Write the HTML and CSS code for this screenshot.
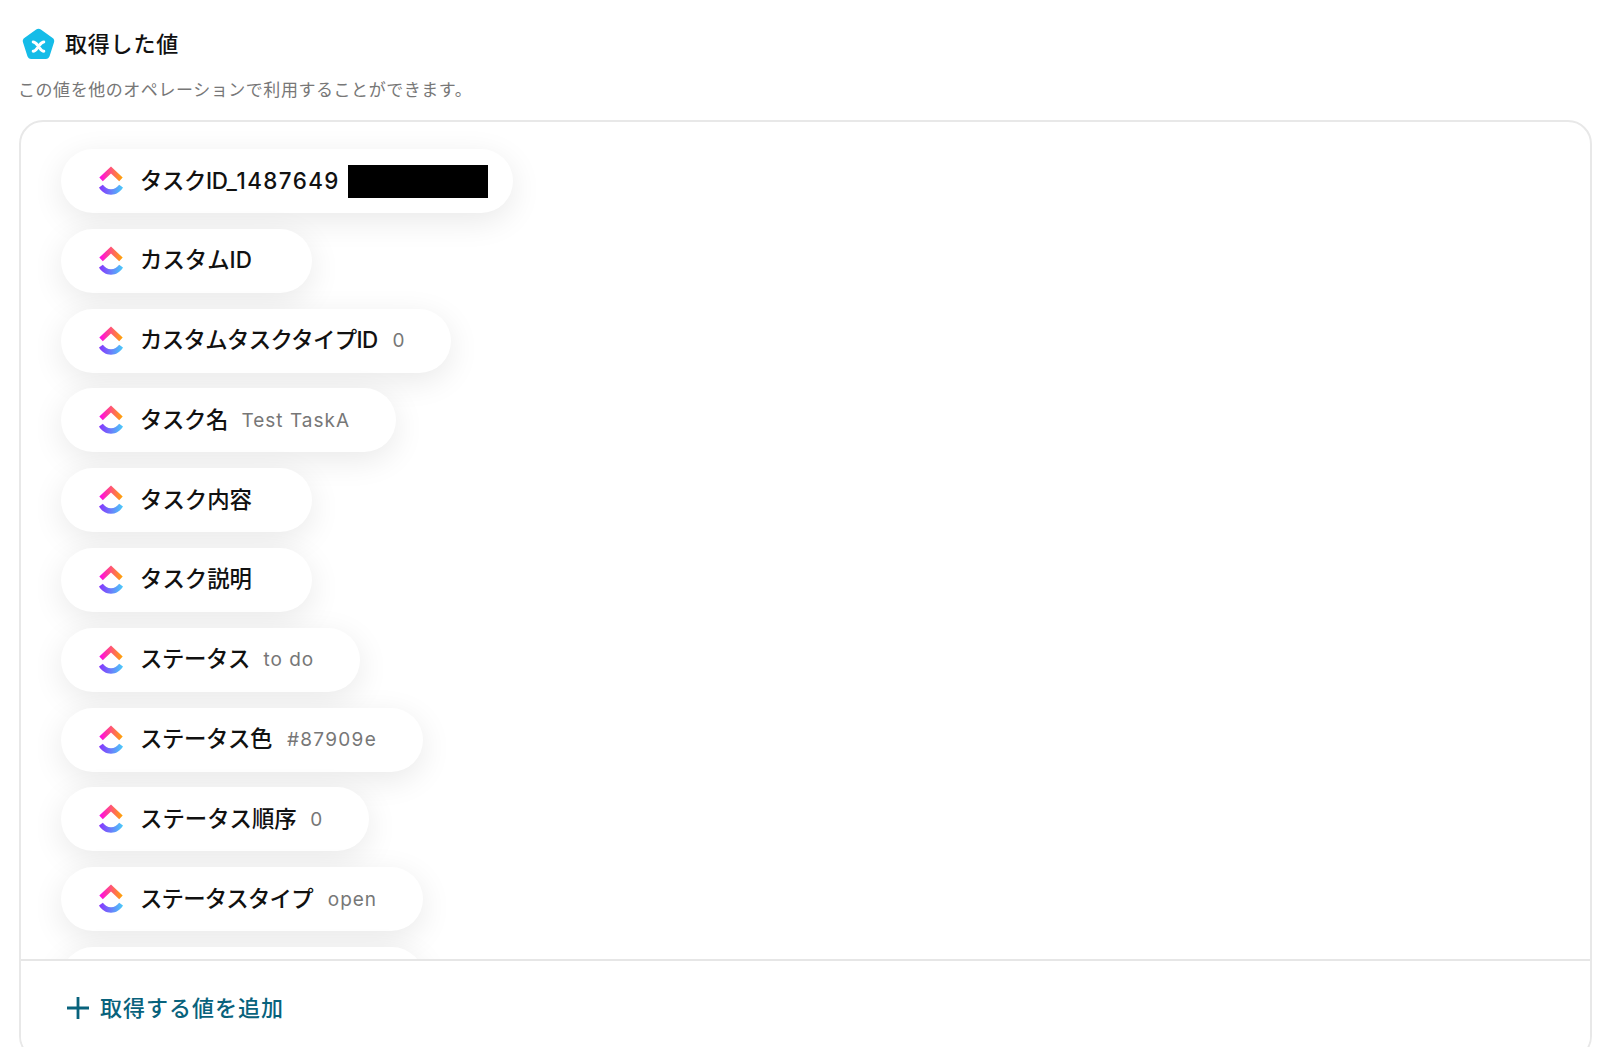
FILE: index.html
```html
<!DOCTYPE html>
<html lang="ja">
<head>
<meta charset="utf-8">
<title>取得した値</title>
<link rel="stylesheet" href="styles.css">
</head>
<body>
<svg class="defs" width="0" height="0" aria-hidden="true">
  <defs>
    <linearGradient id="cuTop" x1="0" y1="0" x2="1" y2="0">
      <stop offset="0" stop-color="#ff02f0"/><stop offset="1" stop-color="#ffa800"/>
    </linearGradient>
    <linearGradient id="cuBottom" x1="0" y1="0" x2="1" y2="0">
      <stop offset="0" stop-color="#8930fd"/><stop offset="1" stop-color="#49ccf9"/>
    </linearGradient>
    <symbol id="cu" viewBox="0 0 24 30">
      <path d="M0.300 11.600 12 0.600 23.700 11.600 20.200 15.300 12 7.600 3.800 15.300Z" fill="url(#cuTop)"/>
      <path d="M0 21.600 3.800 18.700C5.900 21.400 8.600 23.200 12 23.200 15.400 23.200 18.100 21.400 20.200 18.700L24 21.600C21.200 26.200 17 28.800 12 28.800 7 28.800 2.800 26.200 0 21.600Z" fill="url(#cuBottom)"/>
    </symbol>
  </defs>
</svg>
<main class="page">
  <header class="head">
    <svg class="yoom" viewBox="0 0 34 33" aria-hidden="true">
      <path d="M14.600 1.100C16 0 18 0 19.400 1.100L31.600 9.900C33 10.900 33.600 12.700 33 14.300L28.400 28.600C27.900 30.300 26.300 31.400 24.600 31.400H9.400C7.700 31.400 6.100 30.300 5.600 28.600L1 14.300C.4 12.700 1 10.900 2.400 9.900Z" fill="#15bce8"/>
      <path d="M11.500 14C14 14 15 16 17 18.500 19 16 20 14 22.500 14M11.500 23.500C14 23.500 15 21 17 18.500 19 21 20 23.500 22.500 23.500" fill="none" stroke="#fff" stroke-width="3" stroke-linecap="round" stroke-linejoin="round"/>
    </svg>
    <h1 class="title">取得した値</h1>
  </header>
  <p class="sub">この値を他のオペレーションで利用することができます。</p>
  <section class="card">
    <div class="list">
      <div class="pill"><svg class="cu"><use href="#cu"/></svg><span class="label kana-mid">タスクID_<span class="num">1487649</span></span><span class="redact"></span></div>
      <div class="pill"><svg class="cu"><use href="#cu"/></svg><span class="label">カスタムID</span></div>
      <div class="pill"><svg class="cu"><use href="#cu"/></svg><span class="label kana-long">カスタムタスクタイプID</span><span class="value value-far">0</span></div>
      <div class="pill"><svg class="cu"><use href="#cu"/></svg><span class="label kana-mid">タスク名</span><span class="value">Test TaskA</span></div>
      <div class="pill"><svg class="cu"><use href="#cu"/></svg><span class="label">タスク内容</span></div>
      <div class="pill"><svg class="cu"><use href="#cu"/></svg><span class="label">タスク説明</span></div>
      <div class="pill"><svg class="cu"><use href="#cu"/></svg><span class="label kana-mid">ステータス</span><span class="value">to do</span></div>
      <div class="pill"><svg class="cu"><use href="#cu"/></svg><span class="label kana-mid">ステータス色</span><span class="value value-far value-wide">#87909e</span></div>
      <div class="pill"><svg class="cu"><use href="#cu"/></svg><span class="label">ステータス順序</span><span class="value">0</span></div>
      <div class="pill"><svg class="cu"><use href="#cu"/></svg><span class="label kana-tight">ステータスタイプ</span><span class="value value-far">open</span></div>
      <div class="pill pill-cut"></div>
    </div>
    <footer class="foot">
      <svg class="plus" viewBox="0 0 22 22" aria-hidden="true"><path d="M11 0V22M0 11H22" stroke="#08627c" stroke-width="2.800"/></svg>
      <span class="add">取得する値を追加</span>
    </footer>
  </section>
</main>
</body>
</html>
```

FILE: styles.css
```css
* { box-sizing: border-box; }
html, body { margin: 0; height: 100%; overflow: hidden; background: #fff; }
body { font-family: Inter, "Noto Sans CJK JP", sans-serif; color: #111; }
.defs { position: absolute; }
.page { padding: 27px 8px 0 19px; }
.head { display: flex; align-items: center; gap: 10px; padding-left: 3px; height: 34px; }
.yoom { width: 33px; height: 33px; flex: none; }
.title { margin: 0; font-size: 22px; font-weight: 500; letter-spacing: .8px; line-height: 34px; }
.sub { margin: 17px 0 0 -1px; font-size: 17px; line-height: 24px; letter-spacing: .55px; color: #777; }
.card { margin-top: 18px; height: 940px; border: 2px solid #e8e8e8; border-radius: 24px; overflow: hidden; background: #fff; }
.list { height: 837px; overflow: hidden; padding: 27px 0 0 40px; display: flex; flex-direction: column; gap: 15.800px; align-items: flex-start; }
.pill { flex: none; display: flex; align-items: center; min-width: 251px; height: 64px; padding: 0 46px 0 38px; border-radius: 32px; background: #fff; box-shadow: 0 8px 32px rgba(0,0,0,.09); }
.pill-cut { width: 363px; }
.cu { width: 24px; height: 30px; flex: none; margin-right: 17px; }
.label { font-size: 22.400px; font-weight: 500; white-space: nowrap; margin-bottom: 5px; }
.kana-mid { letter-spacing: -.4px; }
.kana-long { letter-spacing: -.65px; }
.kana-tight { letter-spacing: -.8px; }
.num { letter-spacing: 1.400px; }
.value { margin-left: 13.500px; font-size: 19px; letter-spacing: 1px; color: #777; white-space: nowrap; }
.value-far { margin-left: 15px; }
.value-wide { letter-spacing: 1.300px; }
.redact { width: 140px; height: 33px; margin: 0 -21px 0 8px; background: #000; flex: none; }
.foot { height: 95px; border-top: 2px solid #e6e6e6; display: flex; align-items: center; padding-left: 46px; gap: 11px; background: #fff; position: relative; }
.plus { width: 22px; height: 22px; flex: none; }
.add { font-size: 22px; font-weight: 500; letter-spacing: 1px; color: #08627c; margin-bottom: 3px; }
```
